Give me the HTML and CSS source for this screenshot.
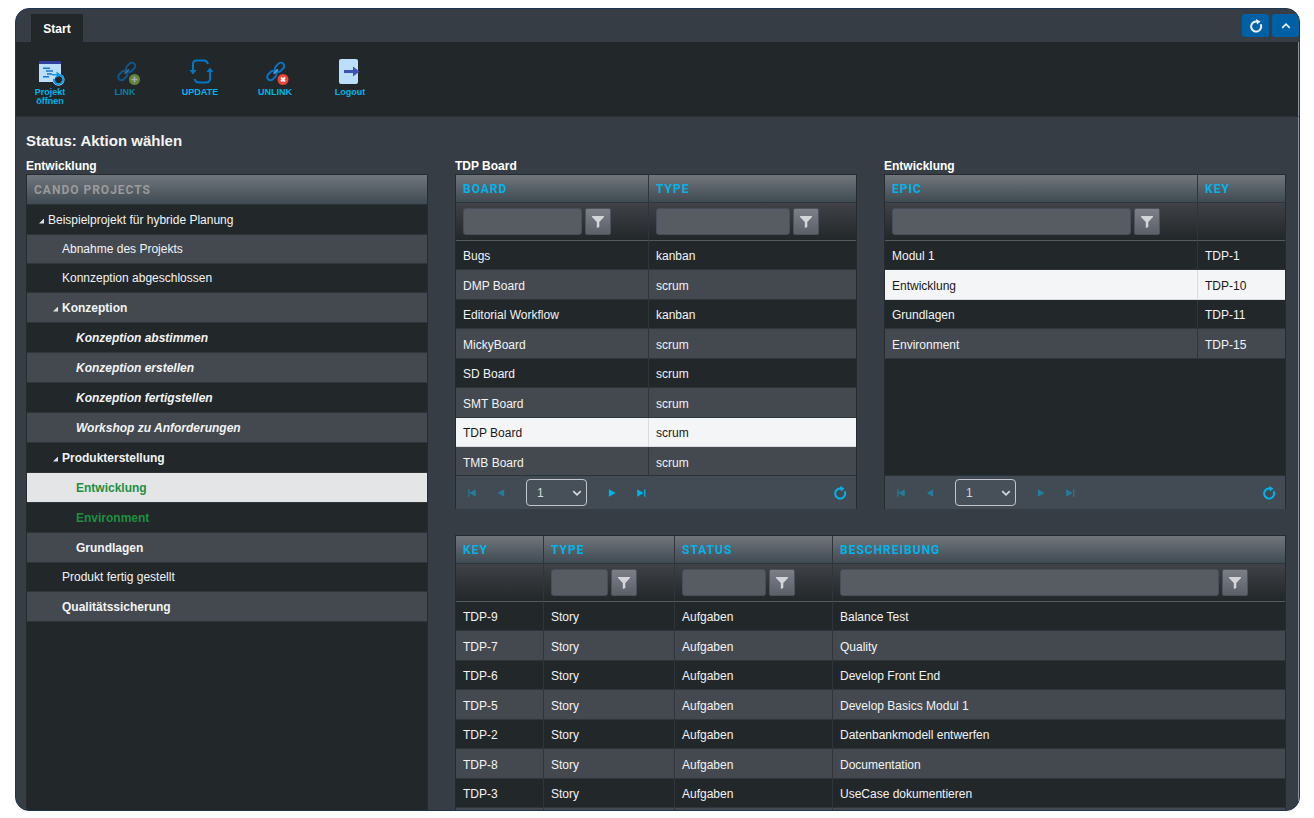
FILE: index.html
```html
<!DOCTYPE html>
<html lang="de">
<head>
<meta charset="utf-8">
<title>CanDo Projects</title>
<link rel="stylesheet" href="styles.css">
</head>
<body>
<svg class="defs" aria-hidden="true">
  <symbol id="funnel" viewBox="0 0 12 12"><path d="M0 0h12v1L7.300 6V11L4.800 12V6L0 1z"/></symbol>
  <symbol id="reload" viewBox="0 0 14 14"><path d="M8.500 2.600H7A5 5 0 1 0 11.600 5.300" fill="none" stroke="currentColor" stroke-width="2"/><path d="M7 0L11.500 2.600L8 5.600z"/></symbol>
  <symbol id="first" viewBox="0 0 8 8"><path d="M1 1h1v6H1zM7 1v6L2 4z"/></symbol>
  <symbol id="prev" viewBox="0 0 8 8"><path d="M6.500 1v6L1.500 4z"/></symbol>
  <symbol id="next" viewBox="0 0 8 8"><path d="M1.500 1v6L7 4z"/></symbol>
  <symbol id="last" viewBox="0 0 8 8"><path d="M6.500 1h1v6h-1zM1 1v6l5-3z"/></symbol>
  <symbol id="chevron" viewBox="0 0 8 8"><path d="M1 2.500L4 5.500L7 2.500" fill="none" stroke="currentColor" stroke-width="1.400"/></symbol>
  <symbol id="chain" viewBox="0 0 20 20"><g fill="none" stroke="#0a74c4" stroke-width="1.800"><rect x="8.500" y="2.800" width="9.500" height="6" rx="3" transform="rotate(-45 13.200 5.800)"/><rect x="1.500" y="10.200" width="9.500" height="6" rx="3" transform="rotate(-45 6.200 13.200)"/><path d="M7.800 11.600L11.800 7.600" stroke="#4aa3e6" stroke-width="1.400"/></g></symbol>
</svg>
<div class="window">
  <header class="tabs">
    <button class="tab">Start</button>
    <div class="tab-tools">
      <button class="blue" aria-label="Neu laden"><svg class="i14"><use href="#reload"/></svg></button>
      <button class="blue" aria-label="Einklappen"><svg class="i10 flip"><use href="#chevron"/></svg></button>
    </div>
  </header>
  <nav class="toolbar">
    <button class="tool">
      <svg viewBox="0 0 26 26"><path fill="#bbdefb" d="M2 4h22v19H2z"/><path fill="#303fa0" d="M2 2h22v3H2z"/><path fill="none" stroke="#1976d2" stroke-width="1.500" d="M6 9.200h7M9 12h7M6 17.800h6M10 15h5"/><circle cx="21.500" cy="20.700" r="6" fill="#bbdefb"/><circle cx="21.500" cy="20.700" r="3.600" fill="#22272a"/><path fill="none" stroke="#0d96e8" stroke-width="2" d="M17 19.800a4.600 4.600 0 1 0 6-3.600"/><path fill="none" stroke="#0d96e8" stroke-width="1.500" d="M15 15.700h6"/><path fill="#0d96e8" d="M19.500 12.500v6.500L24 15.700z"/></svg>
      <span>Projekt öffnen</span></button>
    <button class="tool" disabled>
      <svg viewBox="0 0 26 26"><use href="#chain" x="4" y="2" width="22" height="22"/><circle cx="22.500" cy="20.500" r="5.500" fill="#8bc34a"/><path d="M19.500 20.500h6M22.500 17.500v6" stroke="#fff" stroke-width="1.500"/></svg>
      <span>LINK</span></button>
    <button class="tool">
      <svg viewBox="0 0 26 26"><g fill="none" stroke="#0277c8" stroke-width="2"><path d="M6 12V5q0-3.500 3.500-3.500H17q3 0 4 3.500"/><path d="M23 11v8.500q0 4-4 4h-7q-3.500 0-4.500-3.500"/></g><path fill="#0277c8" d="M2.500 11h7L6 15.500zM19.500 13h7L23 8.500z"/></svg>
      <span>UPDATE</span></button>
    <button class="tool">
      <svg viewBox="0 0 26 26"><use href="#chain" x="3" y="2" width="22" height="22"/><circle cx="21" cy="20.500" r="5.500" fill="#f44336"/><path d="M19 18.500l4 4M23 18.500l-4 4" stroke="#fff" stroke-width="1.800"/></svg>
      <span>UNLINK</span></button>
    <button class="tool">
      <svg viewBox="0 0 26 26"><rect x="2" y="0" width="19" height="25" rx="2" fill="#bbdefb"/><path fill="#3f51b5" d="M7 11h9V7.500l6.500 5-6.500 5V14H7z"/></svg>
      <span>Logout</span></button>
  </nav>
  <main class="content">
    <h1>Status: Aktion wählen</h1>
    <div class="grid">
      <section class="panel tree-panel">
        <h2>Entwicklung</h2>
        <div class="box tree">
          <div class="tree-head">CANDO PROJECTS</div>
          <ul>
            <li class="l0 open">Beispielprojekt für hybride Planung</li>
            <li class="l1 low">Abnahme des Projekts</li>
            <li class="l1 low">Konnzeption abgeschlossen</li>
            <li class="l1 open bold">Konzeption</li>
            <li class="l2 ital">Konzeption abstimmen</li>
            <li class="l2 ital">Konzeption erstellen</li>
            <li class="l2 ital">Konzeption fertigstellen</li>
            <li class="l2 ital">Workshop zu Anforderungen</li>
            <li class="l1 open bold">Produkterstellung</li>
            <li class="l2 bold green picked">Entwicklung</li>
            <li class="l2 bold green">Environment</li>
            <li class="l2 bold">Grundlagen</li>
            <li class="l1 low">Produkt fertig gestellt</li>
            <li class="l1 bold">Qualitätssicherung</li>
          </ul>
        </div>
      </section>
      <section class="panel">
        <h2>TDP Board</h2>
        <div class="box">
          <div class="rows">
            <table>
              <colgroup><col class="c-board"><col></colgroup>
              <thead>
                <tr class="head"><th>BOARD</th><th>TYPE</th></tr>
                <tr class="filter">
                  <td><div class="f"><input aria-label="Board filtern"><button aria-label="Filter"><svg class="i12"><use href="#funnel"/></svg></button></div></td>
                  <td><div class="f"><input aria-label="Type filtern"><button aria-label="Filter"><svg class="i12"><use href="#funnel"/></svg></button></div></td>
                </tr>
              </thead>
              <tbody>
                <tr><td>Bugs</td><td>kanban</td></tr>
                <tr><td>DMP Board</td><td>scrum</td></tr>
                <tr><td>Editorial Workflow</td><td>kanban</td></tr>
                <tr><td>MickyBoard</td><td>scrum</td></tr>
                <tr><td>SD Board</td><td>scrum</td></tr>
                <tr><td>SMT Board</td><td>scrum</td></tr>
                <tr class="picked"><td>TDP Board</td><td>scrum</td></tr>
                <tr><td>TMB Board</td><td>scrum</td></tr>
              </tbody>
            </table>
          </div>
          <div class="pager">
            <button disabled aria-label="Erste Seite"><svg class="i10"><use href="#first"/></svg></button>
            <button disabled aria-label="Vorherige Seite"><svg class="i10"><use href="#prev"/></svg></button>
            <span class="pick"><select aria-label="Seite"><option>1</option></select><svg class="i10"><use href="#chevron"/></svg></span>
            <button aria-label="Nächste Seite"><svg class="i10"><use href="#next"/></svg></button>
            <button aria-label="Letzte Seite"><svg class="i10"><use href="#last"/></svg></button>
            <button class="end" aria-label="Aktualisieren"><svg class="i14"><use href="#reload"/></svg></button>
          </div>
        </div>
      </section>
      <section class="panel">
        <h2>Entwicklung</h2>
        <div class="box">
          <div class="rows">
            <table>
              <colgroup><col><col class="c-key"></colgroup>
              <thead>
                <tr class="head"><th>EPIC</th><th>KEY</th></tr>
                <tr class="filter">
                  <td><div class="f"><input aria-label="Epic filtern"><button aria-label="Filter"><svg class="i12"><use href="#funnel"/></svg></button></div></td>
                  <td></td>
                </tr>
              </thead>
              <tbody>
                <tr><td>Modul 1</td><td>TDP-1</td></tr>
                <tr class="picked"><td>Entwicklung</td><td>TDP-10</td></tr>
                <tr><td>Grundlagen</td><td>TDP-11</td></tr>
                <tr><td>Environment</td><td>TDP-15</td></tr>
              </tbody>
            </table>
          </div>
          <div class="pager">
            <button disabled aria-label="Erste Seite"><svg class="i10"><use href="#first"/></svg></button>
            <button disabled aria-label="Vorherige Seite"><svg class="i10"><use href="#prev"/></svg></button>
            <span class="pick"><select aria-label="Seite"><option>1</option></select><svg class="i10"><use href="#chevron"/></svg></span>
            <button disabled aria-label="Nächste Seite"><svg class="i10"><use href="#next"/></svg></button>
            <button disabled aria-label="Letzte Seite"><svg class="i10"><use href="#last"/></svg></button>
            <button class="end" aria-label="Aktualisieren"><svg class="i14"><use href="#reload"/></svg></button>
          </div>
        </div>
      </section>
      <section class="panel issues">
        <div class="box">
          <table>
            <colgroup><col class="c-id"><col class="c-type"><col class="c-status"><col></colgroup>
            <thead>
              <tr class="head"><th>KEY</th><th>TYPE</th><th>STATUS</th><th>BESCHREIBUNG</th></tr>
              <tr class="filter">
                <td></td>
                <td><div class="f"><input aria-label="Type filtern"><button aria-label="Filter"><svg class="i12"><use href="#funnel"/></svg></button></div></td>
                <td><div class="f"><input aria-label="Status filtern"><button aria-label="Filter"><svg class="i12"><use href="#funnel"/></svg></button></div></td>
                <td><div class="f"><input aria-label="Beschreibung filtern"><button aria-label="Filter"><svg class="i12"><use href="#funnel"/></svg></button></div></td>
              </tr>
            </thead>
            <tbody>
              <tr><td>TDP-9</td><td>Story</td><td>Aufgaben</td><td>Balance Test</td></tr>
              <tr><td>TDP-7</td><td>Story</td><td>Aufgaben</td><td>Quality</td></tr>
              <tr><td>TDP-6</td><td>Story</td><td>Aufgaben</td><td>Develop Front End</td></tr>
              <tr><td>TDP-5</td><td>Story</td><td>Aufgaben</td><td>Develop Basics Modul 1</td></tr>
              <tr><td>TDP-2</td><td>Story</td><td>Aufgaben</td><td>Datenbankmodell entwerfen</td></tr>
              <tr><td>TDP-8</td><td>Story</td><td>Aufgaben</td><td>Documentation</td></tr>
              <tr><td>TDP-3</td><td>Story</td><td>Aufgaben</td><td>UseCase dokumentieren</td></tr>
              <tr><td></td><td></td><td></td><td></td></tr>
            </tbody>
          </table>
        </div>
      </section>
    </div>
  </main>
</div>
</body>
</html>
```
FILE: styles.css
```css
* { box-sizing: border-box; }
body {
  margin: 0;
  height: 100vh;
  padding: 8px 14px 7px 15px;
  background: #fff;
  color: #f2f4f5;
  font: 12px/16px "Liberation Sans", Arial, sans-serif;
}
button, input, select { font: inherit; color: inherit; margin: 0; padding: 0; border: 0; background: none; }
svg { display: block; fill: currentColor; }
.defs { position: absolute; width: 0; height: 0; }
.i10 { width: 10px; height: 10px; }
.i12 { width: 12px; height: 12px; }
.i14 { width: 14px; height: 14px; }
.flip { transform: rotate(180deg); }

.window {
  height: 100%;
  display: flex;
  flex-direction: column;
  overflow: hidden;
  border: 1px solid #1c3553;
  border-radius: 14px;
  background: #373d44;
}
.tabs { flex: none; height: 33px; display: flex; justify-content: space-between; padding-left: 15px; }
.tab { align-self: flex-end; width: 52px; height: 28px; padding-top: 2px; background: #22272a; font-weight: bold; color: #fff; }
.tab-tools { display: flex; gap: 3px; padding-top: 5px; }
.blue { width: 27px; height: 23px; display: grid; place-items: center; border-radius: 3px; background: #0060a5; color: #e8f1f8; }

.toolbar { flex: none; height: 75px; display: flex; gap: 25px; padding: 17px 9px 0; background: #22272a; border-bottom: 1px solid #2b3035; border-right: 1px solid #8d9399; }
.tool { width: 50px; display: flex; flex-direction: column; align-items: center; gap: 3px; color: #00b4ea; font-size: 9px; line-height: 9px; font-weight: bold; }
.tool svg { width: 26px; height: 26px; flex: none; overflow: visible; }
.tool span { max-width: 36px; display: flex; justify-content: center; }
.tool:disabled { opacity: .6; }

.content { flex: 1; min-height: 0; display: flex; flex-direction: column; padding: 15px 12px 0 10px; border-right: 1px solid #8d9399; }
h1 { margin: 0; font-size: 15px; line-height: 18px; font-weight: bold; color: #f2f4f5; }
h2 { margin: 0; font-size: 12px; line-height: 16px; font-weight: bold; color: #fff; }
.grid {
  flex: 1;
  min-height: 0;
  display: grid;
  grid-template-columns: repeat(3, minmax(0, 1fr));
  grid-template-rows: auto minmax(0, 1fr);
  column-gap: 27px;
  row-gap: 26px;
  padding-top: 8px;
}
.panel { display: flex; flex-direction: column; min-height: 0; }
.tree-panel { grid-row: 1 / 3; }
.issues { grid-column: 2 / 4; }
.box { border: 1px solid #262b30; border-bottom: 0; background: #22272a; overflow: hidden; }
.tree, .issues .box { flex: 1; }

.tree-head, th {
  background: linear-gradient(#71767c, #3f4a52);
  font: bold 12px/16px Roboto, "Liberation Sans", sans-serif;
  letter-spacing: 1px;
  text-align: left;
}
.tree-head { height: 30px; padding: 7px; color: #9a9a9a; border-bottom: 1px solid #2b333a; }
ul { list-style: none; margin: 0; padding: 0; }
li { height: 30px; display: flex; align-items: center; border-bottom: 1px solid #30353b; }
li:nth-child(even) { background: #444950; }
li.low { height: 29px; }
.l0 { padding-left: 21px; }
.l1 { padding-left: 35px; }
.l2 { padding-left: 49px; }
.open::before { content: ""; width: 5px; height: 5px; margin: 3px 4px 0 -9px; background: #dfe1e3; clip-path: polygon(100% 0, 100% 100%, 0 100%); }
.bold, .ital { font-weight: bold; }
.ital { font-style: italic; }
.green { color: #1f8f3f; }
li.picked { background: #e4e5e7; }

table { width: 100%; border-collapse: separate; border-spacing: 0; table-layout: fixed; }
.c-board { width: 192px; }
.c-key { width: 88px; }
.c-id { width: 87px; }
.c-type { width: 131px; }
.c-status { width: 158px; }
th, td { padding: 0 0 0 7px; border-bottom: 1px solid #30353b; }
th + th, td + td { border-left: 1px solid #30353b; }
th { height: 28px; color: #00b4ea; }
.filter td { height: 38px; background: linear-gradient(#3f4246, #22272a); border-bottom-color: #565b5f; }
.f { display: flex; gap: 3px; margin-right: 37px; }
.f input { flex: 1; min-width: 0; height: 27px; border: 1px solid #454e5a; border-radius: 3px; background: #575c63; }
.f button { flex: none; width: 26px; height: 27px; display: grid; place-items: center; border: 1px solid #4d535c; border-radius: 2px; background: linear-gradient(#7c7f86, #5b6069); color: #d3d5d8; }
tbody td { height: 29px; padding-top: 2px; }
tbody tr:nth-child(even) td { height: 30px; background: #444950; }
tbody tr.picked td { background: #f4f5f7; color: #16191b; border-color: #d9dbde; }
.rows { height: 300px; overflow: hidden; }

.pager { height: 34px; display: flex; align-items: center; gap: 1px; padding: 0 2px; background: #424b53; border-top: 1px solid #2b333a; color: #00b4ea; }
.pager button { width: 28px; height: 28px; display: grid; place-items: center; }
.pager button:disabled { color: #1f7f9e; }
.pick { position: relative; width: 61px; margin: 0 10px; }
.pick select { width: 100%; height: 27px; padding-left: 10px; appearance: none; border: 1px solid #c3c7cb; border-radius: 4px; background: #475059; color: #d5d8da; }
.pick svg { position: absolute; right: 5px; top: 9px; color: #d5d8da; pointer-events: none; }
.pager .end { margin-left: auto; }
```
